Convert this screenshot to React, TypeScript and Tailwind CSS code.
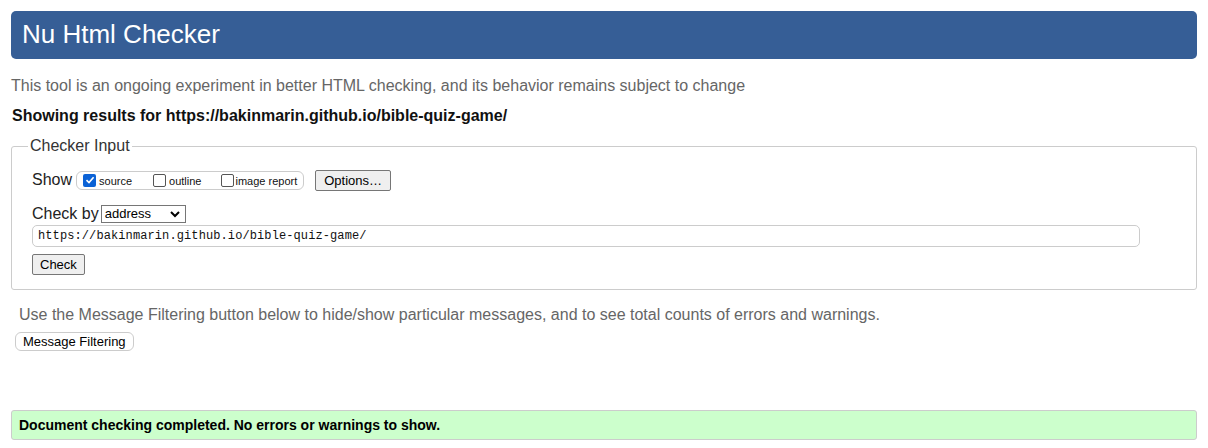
import React from 'react';

const App: React.FC = () => {
  const url = 'https://bakinmarin.github.io/bible-quiz-game/';

  return (
    <div className="min-h-[448px] bg-white px-[11px] pt-[11px] text-[#222] font-['Liberation_Sans',Arial,sans-serif]">
      {/* title bar */}
      <h1 className="h-[48px] rounded-[5px] bg-[#365e96] pl-[11px] text-[26px] leading-[46px] font-normal text-white">
        Nu Html Checker
      </h1>

      <p className="mt-[16px] text-[16px] leading-[22px] text-[#666]">
        This tool is an ongoing experiment in better HTML checking, and its behavior remains subject to change
      </p>
      <p className="mt-[8px] pl-[1px] text-[16px] leading-[22px] font-bold text-[#111]">
        Showing results for {url}
      </p>

      {/* checker input */}
      <fieldset className="mt-[9px] h-[154px] rounded-[3px] border border-[#ccc] pl-[20px] pr-[56px]">
        <legend className="ml-[-4px] px-[2px] text-[16px] leading-[20px] text-[#333]">Checker Input</legend>

        <div className="mt-[12px] flex items-center">
          <span className="text-[16px] text-[#222]">Show</span>
          <div className="ml-[4px] flex h-[19px] items-center rounded-[6px] border border-[#ccc] px-[6px] text-[11px] text-[#111]">
            <label className="flex items-center">
              <span className="flex h-[13px] w-[13px] items-center justify-center rounded-[2px] bg-[#0b62d6]">
                <svg width="10" height="10" viewBox="0 0 10 10">
                  <path d="M1.5 5.2 L4 7.6 L8.6 2.2" fill="none" stroke="white" strokeWidth="1.6" />
                </svg>
              </span>
              <span className="ml-[3px] mt-[3px]">source</span>
            </label>
            <label className="ml-[21px] flex items-center">
              <span className="h-[13px] w-[13px] rounded-[2px] border border-[#555] bg-white" />
              <span className="ml-[3px] mt-[3px]">outline</span>
            </label>
            <label className="ml-[20px] flex items-center">
              <span className="h-[13px] w-[13px] rounded-[2px] border border-[#555] bg-white" />
              <span className="ml-[1px] mt-[3px]">image report</span>
            </label>
          </div>
          <button className="ml-[11px] h-[21px] rounded-[2px] border border-[#767676] bg-[#efefef] px-[8px] text-[13px] leading-[19px] text-black">
            Options…
          </button>
        </div>

        <div className="mt-[10px] flex items-center">
          <span className="text-[16px] text-[#222]">Check by</span>
          <div className="ml-[2px] flex h-[18px] w-[85px] items-center justify-between border border-[#767676] bg-white pl-[3px] pr-[5px] text-[13px] text-black">
            <span>address</span>
            <svg width="10" height="7" viewBox="0 0 10 7">
              <path d="M1 1 L5 5 L9 1" fill="none" stroke="black" strokeWidth="2" />
            </svg>
          </div>
        </div>

        <div className="mt-[-1px] flex h-[22px] items-center rounded-[5px] border border-[#ccc] px-[5px] font-['Liberation_Mono','Courier_New',monospace] text-[12px] tracking-[0.1px] text-[#111]">
          {url}
        </div>

        <button className="mt-[7px] h-[21px] rounded-[2px] border border-[#767676] bg-[#efefef] px-[7px] text-[13px] leading-[19px] text-black">
          Check
        </button>
      </fieldset>

      <p className="mt-[14px] pl-[8px] text-[16px] leading-[22px] text-[#666]">
        Use the Message Filtering button below to hide/show particular messages, and to see total counts of errors and warnings.
      </p>
      <button className="ml-[4px] mt-[6px] h-[19px] rounded-[6px] border border-[#ccc] bg-white px-[7px] text-[13px] leading-[17px] text-black">
        Message Filtering
      </button>

      <div className="mt-[57px] flex h-[30px] items-center rounded-[3px] border border-[#ccc] bg-[#ccffcc] pl-[7px] text-[14px] font-bold text-black">
        Document checking completed. No errors or warnings to show.
      </div>
    </div>
  );
};

export default App;
